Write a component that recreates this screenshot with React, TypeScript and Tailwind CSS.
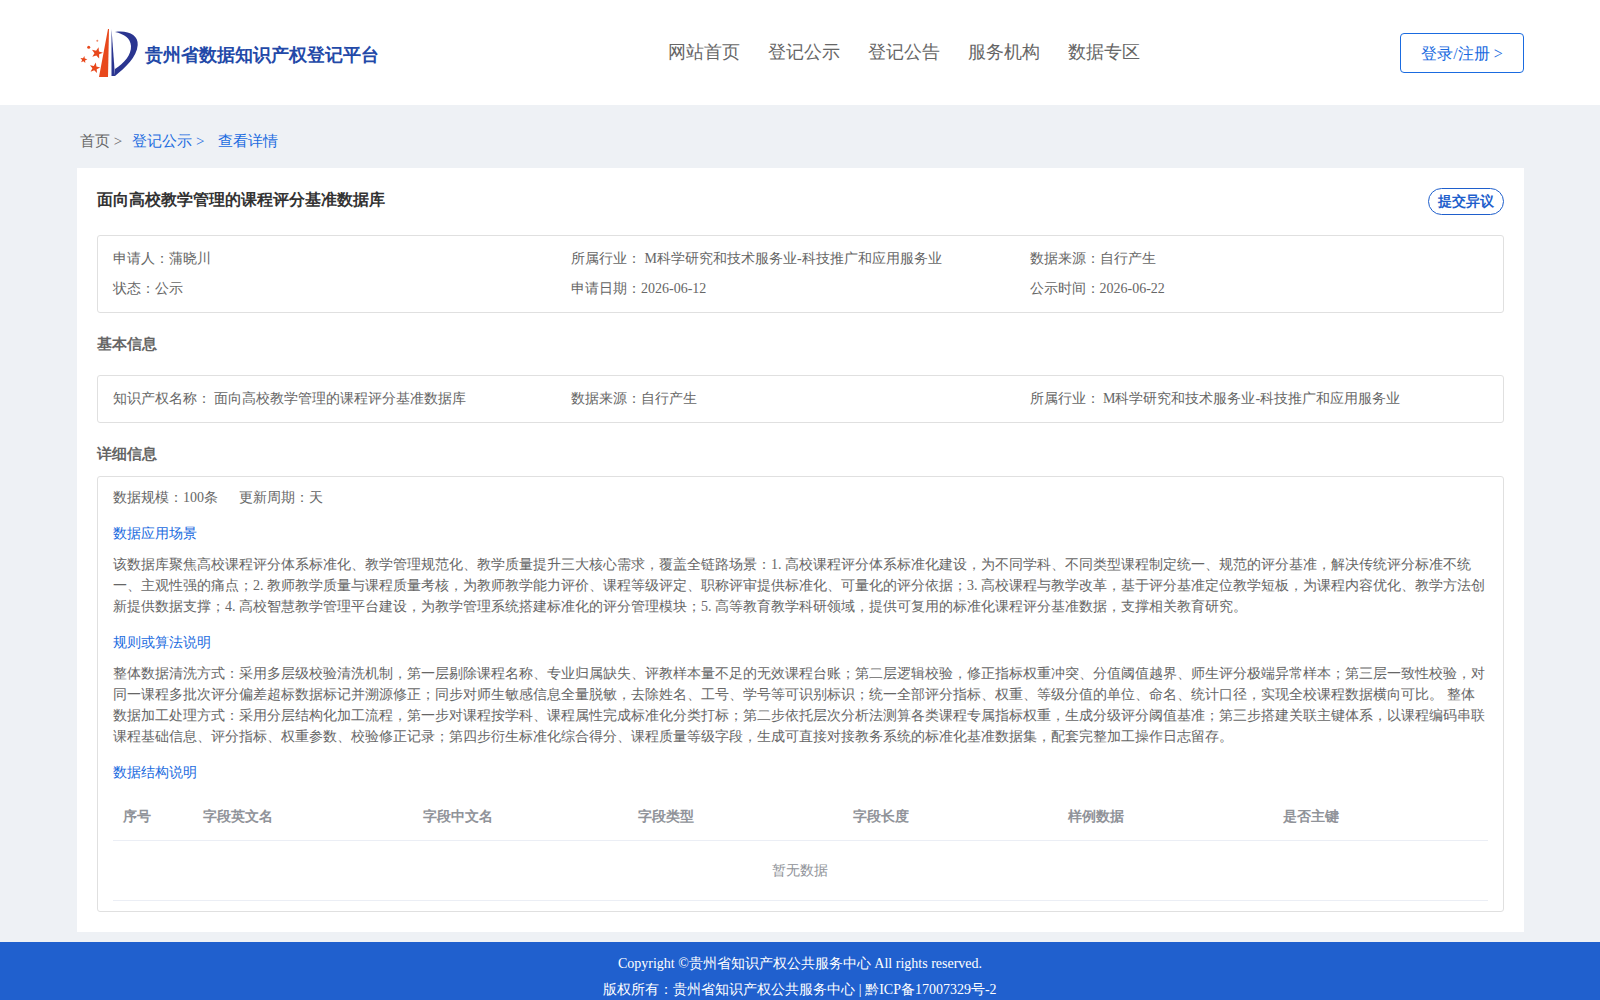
const navItems = ['网站首页', '登记公示', '登记公告', '服务机构', '数据专区']
const columns = [
  { name: '序号', width: 'w-[80px]' },
  { name: '字段英文名', width: 'w-[220px]' },
  { name: '字段中文名', width: 'w-[215px]' },
  { name: '字段类型', width: 'w-[215px]' },
  { name: '字段长度', width: 'w-[215px]' },
  { name: '样例数据', width: 'w-[215px]' },
  { name: '是否主键', width: 'flex-1' },
]

function Star({ cx, cy, r, tilt }: { cx: number; cy: number; r: number; tilt: number }) {
  const points = Array.from({ length: 10 }, (_, i) => {
    const radius = i % 2 === 0 ? r : r * 0.42
    const angle = ((i * 36 + tilt - 90) * Math.PI) / 180
    return `${cx + radius * Math.cos(angle)},${cy + radius * Math.sin(angle)}`
  }).join(' ')
  return <polygon points={points} fill="#e8481c" />
}

function Logo() {
  return (
    <svg width="60" height="52" viewBox="0 0 60 52" className="shrink-0">
      <path d="M19 50 L28 2 L29 2 L28 50 Z" fill="#e8481c" />
      <path d="M31.5 2 L35 49 L31.5 49 Z" fill="#2a3590" />
      <path d="M35 5 C48 3 58.5 8 57.7 18 C57 30 45 41 35 49 L35 42 C44 36 51.5 28 51 19 C50.5 11 44 7 35 5 Z" fill="#2a3590" />
      <Star cx={17} cy={26} r={6} tilt={15} />
      <Star cx={14.7} cy={41} r={5.5} tilt={12} />
      <Star cx={3.7} cy={32.7} r={3.7} tilt={10} />
      <circle cx="8.7" cy="20.3" r="1.5" fill="#e8481c" />
      <circle cx="17.3" cy="13.7" r="1" fill="#ee8a6a" />
    </svg>
  )
}

function Header() {
  return (
    <header className="h-[105px] bg-white flex items-center justify-between pl-[80px] pr-[76px]">
      <div className="flex items-center w-[300px] pt-[1px]">
        <Logo />
        <span className="ml-[5px] mt-[4px] text-[18px] font-bold text-[#2349a8] whitespace-nowrap">贵州省数据知识产权登记平台</span>
      </div>
      <nav className="flex gap-[28px] text-[18px] text-[#666666] ml-[28px]">
        {navItems.map((item) => (
          <a key={item}>{item}</a>
        ))}
      </nav>
      <button className="w-[124px] h-[40px] pt-[2px] border border-[#1a6be0] rounded text-[16px] text-[#1a6be0]">登录/注册 &gt;</button>
    </header>
  )
}

export default function App() {
  return (
    <div className="min-h-screen bg-[#eef1f5] text-[14px] text-[#666666] font-['Liberation_Serif',serif]">
      <Header />
      <main className="pl-[77px] pr-[76px] pb-[10px]">
        <div className="h-[63px] flex items-center pl-[3px] pt-[9px] text-[15px]">
          <span className="text-[#666666]">首页 &gt;</span>
          <span className="ml-[10px] text-[#1a6be0]">登记公示 &gt;</span>
          <span className="ml-[14px] text-[#1a6be0]">查看详情</span>
        </div>
        <section className="bg-white h-[764px] px-[20px] pt-[20px]">
          <div className="flex justify-between h-[47px]">
            <h1 className="text-[16px] font-bold text-[#333333] leading-[24px]">面向高校教学管理的课程评分基准数据库</h1>
            <button className="w-[76px] h-[27px] border border-[#1f5fcc] rounded-[14px] text-[14px] font-bold text-[#1f5fcc]">提交异议</button>
          </div>
          <div className="border border-[#e0e0e0] rounded-[3px] h-[78px] px-[15px] pt-[8px] leading-[30px] grid grid-cols-[458px_458.5px_1fr] content-start">
            <div>申请人：蒲晓川</div>
            <div>所属行业： M科学研究和技术服务业-科技推广和应用服务业</div>
            <div>数据来源：自行产生</div>
            <div>状态：公示</div>
            <div>申请日期：2026-06-12</div>
            <div>公示时间：2026-06-22</div>
          </div>
          <h2 className="mt-[21px] mb-[20px] font-bold leading-[21px] text-[15px]">基本信息</h2>
          <div className="border border-[#e0e0e0] rounded-[3px] h-[48px] px-[15px] pb-[1px] grid grid-cols-[458px_458.5px_1fr] items-center">
            <div>
              知识产权名称：<span className="ml-[3px]">面向高校教学管理的课程评分基准数据库</span>
            </div>
            <div>数据来源：自行产生</div>
            <div>所属行业： M科学研究和技术服务业-科技推广和应用服务业</div>
          </div>
          <h2 className="mt-[21px] mb-[11px] font-bold leading-[21px] text-[15px]">详细信息</h2>
          <div className="border border-[#e0e0e0] rounded-[3px] h-[436px] px-[15px] pt-[10px]">
            <div className="leading-[21px] flex gap-[21px]">
              <span>数据规模：100条</span>
              <span>更新周期：天</span>
            </div>
            <h3 className="mt-[15px] leading-[21px] text-[#1a6be0]">数据应用场景</h3>
            <p className="mt-[10px] leading-[21px]">
              该数据库聚焦高校课程评分体系标准化、教学管理规范化、教学质量提升三大核心需求，覆盖全链路场景：1. 高校课程评分体系标准化建设，为不同学科、不同类型课程制定统一、规范的评分基准，解决传统评分标准不统一、主观性强的痛点；2. 教师教学质量与课程质量考核，为教师教学能力评价、课程等级评定、职称评审提供标准化、可量化的评分依据；3. 高校课程与教学改革，基于评分基准定位教学短板，为课程内容优化、教学方法创新提供数据支撑；4. 高校智慧教学管理平台建设，为教学管理系统搭建标准化的评分管理模块；5. 高等教育教学科研领域，提供可复用的标准化课程评分基准数据，支撑相关教育研究。
            </p>
            <h3 className="mt-[15px] leading-[21px] text-[#1a6be0]">规则或算法说明</h3>
            <p className="mt-[10px] leading-[21px]">
              整体数据清洗方式：采用多层级校验清洗机制，第一层剔除课程名称、专业归属缺失、评教样本量不足的无效课程台账；第二层逻辑校验，修正指标权重冲突、分值阈值越界、师生评分极端异常样本；第三层一致性校验，对同一课程多批次评分偏差超标数据标记并溯源修正；同步对师生敏感信息全量脱敏，去除姓名、工号、学号等可识别标识；统一全部评分指标、权重、等级分值的单位、命名、统计口径，实现全校课程数据横向可比。 整体数据加工处理方式：采用分层结构化加工流程，第一步对课程按学科、课程属性完成标准化分类打标；第二步依托层次分析法测算各类课程专属指标权重，生成分级评分阈值基准；第三步搭建关联主键体系，以课程编码串联课程基础信息、评分指标、权重参数、校验修正记录；第四步衍生标准化综合得分、课程质量等级字段，生成可直接对接教务系统的标准化基准数据集，配套完整加工操作日志留存。
            </p>
            <h3 className="mt-[15px] leading-[21px] text-[#1a6be0]">数据结构说明</h3>
            <div className="mt-[9px]">
              <div className="flex h-[49px] items-center border-b border-[#ebeef5] font-bold text-[#909399]">
                {columns.map((col) => (
                  <div key={col.name} className={`${col.width} pl-[10px]`}>
                    {col.name}
                  </div>
                ))}
              </div>
              <div className="flex h-[60px] items-center justify-center pr-[1px] border-b border-[#ebeef5] text-[#909399]">暂无数据</div>
            </div>
          </div>
        </section>
      </main>
      <footer className="bg-[#2060ce] h-[100px] pt-[9px] text-center text-[14px] leading-[26px] text-white">
        <div>Copyright ©贵州省知识产权公共服务中心 All rights reserved.</div>
        <div>版权所有：贵州省知识产权公共服务中心 | 黔ICP备17007329号-2</div>
      </footer>
    </div>
  )
}
